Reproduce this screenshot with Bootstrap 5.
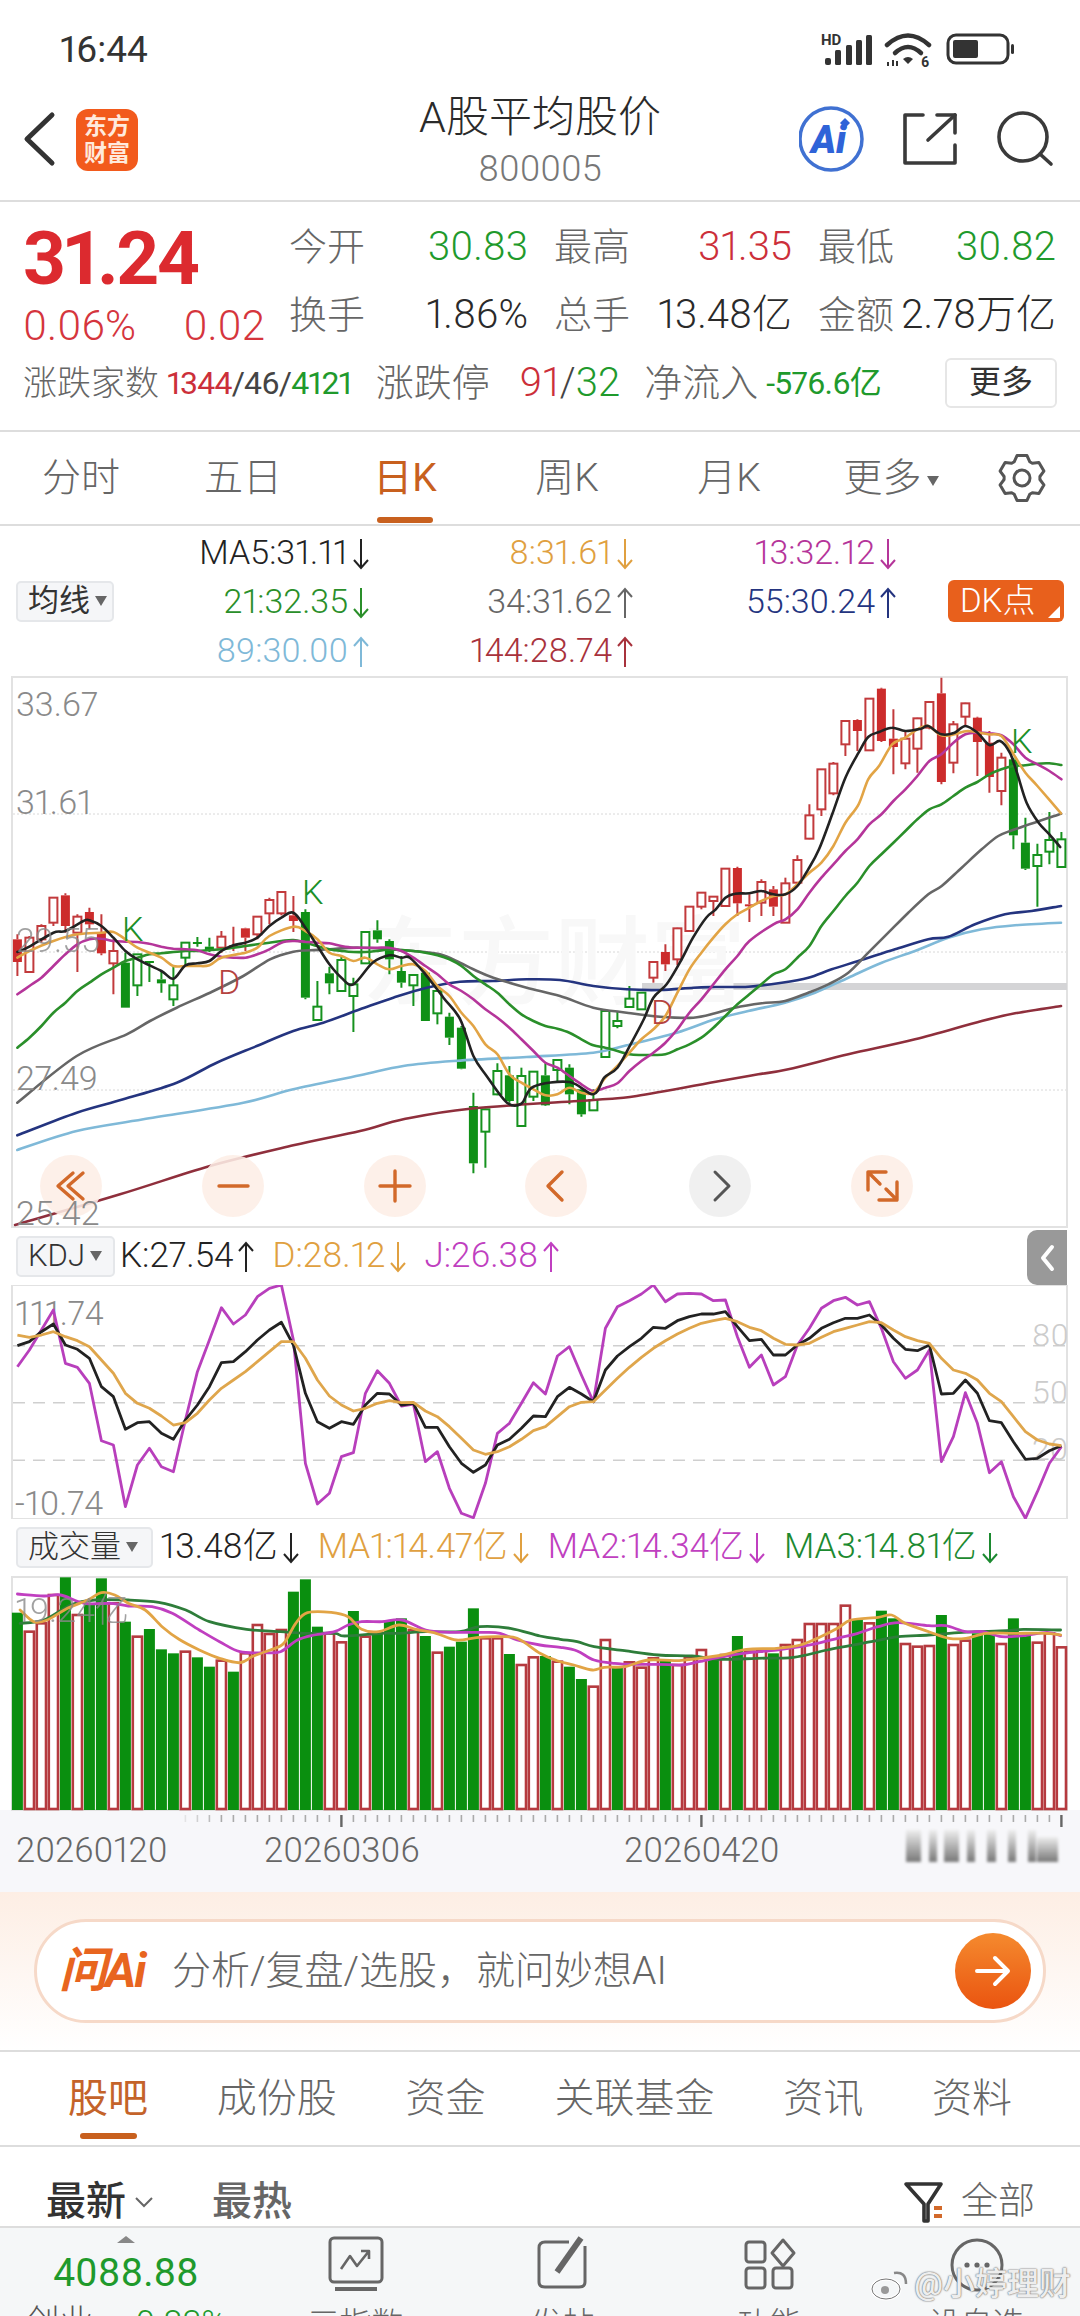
<!DOCTYPE html>
<html lang="zh-CN">
<head>
  <meta charset="UTF-8" />
  <meta name="viewport" content="width=device-width, initial-scale=1.0"/>
  <title>A股平均股价</title>
  <link href="https://cdn.jsdelivr.net/npm/bootstrap@5.3.2/dist/css/bootstrap.min.css" rel="stylesheet" />
  <style>
    body { width: 1080px; height: 2316px; overflow: hidden; background: #fff; color: #333; font-family: Roboto, "Noto Sans CJK SC", sans-serif; font-variant-numeric: proportional-nums; }
    svg { display: block; }
    .status-bar { height: 80px; padding: 20px 60px 0 60px; }
    .status-time { font-size: 37px; font-weight: 400; color: #333; }
    .title-bar { height: 122px; border-bottom: 2px solid #ddd; display: grid; grid-template-columns: 1fr auto 1fr; align-items: center; }
    .brand-logo { width: 62px; height: 62px; margin-left: 16px; border-radius: 12px; background: #f25a1c; color: #ffeadd; font-size: 23px; font-weight: 700; line-height: 27px; text-align: center; padding-top: 4px; }
    .title-text { font-size: 43px; line-height: 58px; color: #2a2a2a; text-align: center; font-weight: 300; }
    .title-code { font-size: 36px; line-height: 46px; color: #777; text-align: center; font-weight: 300; }
    .quote-box { height: 230px; border-bottom: 2px solid #ddd; padding-top: 11px; }
    .price-col { width: 289px; padding-left: 23px; }
    .price-big { font-size: 75px; line-height: 90px; font-weight: 700; color: #dc2a2f; letter-spacing: -2.5px; }
    .price-sub { font-size: 42px; line-height: 46px; color: #d5353d; font-weight: 300; width: 242px; }
    .stat-grid { display: grid; grid-template-columns: 239px 238px 238px; column-gap: 26px; grid-auto-rows: 68px; }
    .stat-cell { display: flex; justify-content: space-between; align-items: center; font-size: 40px; color: #2a2a2a; font-weight: 300; white-space: nowrap; }
    .stat-cell b { font-size: 38px; font-weight: 300; color: #666; }
    .up-text { color: #cc2f3a; }
    .down-text { color: #1f9a2c; }
    .breadth-row { height: 68px; padding: 0 23px; font-size: 38px; color: #666; font-weight: 300; }
    .breadth-row .tiny-num { font-size: 32px; color: #444; font-weight: 400; letter-spacing: -.8px; }
    .breadth-row .mid-num { font-size: 40px; color: #444; margin-left: 30px; }
    .more-btn { width: 112px; height: 50px; border: 2px solid #e6e6e6; border-radius: 6px; font-size: 32px; color: #333; line-height: 44px; text-align: center; font-weight: 400; }
    .period-tabs { height: 94px; border-bottom: 2px solid #ddd; font-size: 39px; color: #666; font-weight: 300; }
    .period-tabs > div { width: 162px; text-align: center; position: relative; }
    .period-tabs .is-on { color: #c8601e; font-weight: 400; }
    .period-tabs .is-on::after { content: ""; position: absolute; left: 53px; width: 56px; height: 6px; bottom: -16px; border-radius: 3px; background: #c8601e; }
    .caret-down { display: inline-block; border-left: 6px solid transparent; border-right: 6px solid transparent; border-top: 10px solid #666; margin-left: 5px; vertical-align: 5px; }
    .ma-legend { height: 150px; padding: 0 16px; }
    .drop-btn { background: #f5f6f8; border: 2px solid #e5e7ea; border-radius: 5px; height: 41px; font-size: 31px; line-height: 36px; color: #333; padding: 0 5px 0 10px; white-space: nowrap; }
    .ma-grid { display: grid; grid-template-columns: 256px 264px 263px; grid-auto-rows: 49px; font-size: 34px; line-height: 49px; text-align: right; font-weight: 300; }
    .arrow-mark { display: inline-block; width: 18px; height: 32px; margin-left: 4px; vertical-align: -6px; fill: none; stroke: currentColor; stroke-width: 2; }
    .dk-btn { width: 116px; height: 42px; border-radius: 6px; background: #e8601c; color: #fff; font-size: 33px; line-height: 42px; padding-left: 12px; position: relative; font-weight: 300; }
    .dk-btn::after { content: ""; position: absolute; right: 4px; bottom: 4px; border-left: 12px solid transparent; border-bottom: 12px solid #fff; }
    .indicator-head { height: 57px; padding-left: 16px; font-size: 35px; font-weight: 300; position: relative; white-space: nowrap; }
    .side-tab { position: absolute; right: 13px; top: 2px; width: 40px; height: 55px; background: #999; border-radius: 10px 0 0 10px; }
    .chart-label { font-size: 34px; fill: #8a8a8a; font-weight: 300; }
    .chart-date { font-size: 34.5px; fill: #666; font-weight: 300; }
    .chart-mark { font-size: 34px; font-weight: 300; }
    .ai-band { height: 160px; padding: 27px 34px 0; border-bottom: 2px solid #ddd; background: linear-gradient(180deg, #fdeee4 0%, #fff 100%); }
    .ai-pill { height: 104px; border: 3px solid #f6d9c8; border-radius: 52px; background: #fff; padding: 0 12px 0 22px; }
    .ai-logo { font-size: 48px; font-weight: 700; font-style: italic; color: #e8651f; width: 113px; letter-spacing: -2px; white-space: nowrap; }
    .ai-hint { font-size: 39px; color: #666; font-weight: 300; }
    .ai-go { width: 76px; height: 76px; border-radius: 50%; background: linear-gradient(180deg, #f58a2e, #ea5410); }
    .info-tabs { height: 95px; border-bottom: 2px solid #ddd; padding: 0 68px; font-size: 40px; color: #666; font-weight: 300; }
    .info-tabs > div { position: relative; }
    .info-tabs .is-on { color: #c4632a; font-weight: 400; }
    .info-tabs .is-on::after { content: ""; position: absolute; left: 12px; right: 11px; height: 6px; bottom: -10px; border-radius: 3px; background: #c8601e; }
    .sort-row { height: 81px; border-bottom: 2px solid #ddd; padding: 30px 45px 0 46px; font-size: 40px; }
    .sort-row .sort-on { font-weight: 500; color: #333; }
    .sort-row .sort-off { font-weight: 500; color: #666; margin-left: 58px; }
    .bottom-bar { display: grid; grid-template-columns: 252px repeat(4, 1fr); height: 90px; background: #f5f7f8; position: relative; overflow: hidden; text-align: center; }
    .index-up { width: 0; height: 0; margin: 8px auto 0; border-left: 9px solid transparent; border-right: 9px solid transparent; border-bottom: 7px solid #888; }
    .index-num { font-size: 39px; line-height: 46px; color: #1f9a2c; margin-top: 7px; }
    .index-sub { font-size: 34px; line-height: 40px; color: #555; font-weight: 300; margin-top: 6px; white-space: nowrap; }
    .tool-item { padding-top: 8px; }
    .tool-item svg { margin: 0 auto; }
    .tool-item div { font-size: 32px; line-height: 40px; color: #666; margin-top: 12px; font-weight: 300; }
    .weibo-mark { position: absolute; right: 9px; bottom: 10px; color: rgba(255,255,255,.88); font-size: 32px; font-weight: 500; text-shadow: 0 0 2px #777, 0 0 1px #555; white-space: nowrap; }
  </style>
</head>
<body>

  <svg width="0" height="0" style="position:absolute">
    <symbol id="arrowDown" viewBox="0 0 18 32"><path d="M9 1V30M2 22L9 30L16 22"/></symbol>
    <symbol id="arrowUp" viewBox="0 0 18 32"><path d="M9 31V2M2 10L9 2L16 10"/></symbol>
  </svg>

  <div class="status-bar d-flex justify-content-between align-items-center">
    <span class="status-time">16:44</span>
    <svg width="200" height="40" viewBox="820 30 200 40">
      <text x="821" y="45" font-size="15" font-weight="700" fill="#333">HD</text>
      <g fill="#333">
        <rect x="825" y="58" width="6" height="7" rx="2"/><rect x="835" y="50" width="6" height="15" rx="1.5"/><rect x="846" y="45" width="6" height="20" rx="1.5"/><rect x="856" y="40" width="6" height="25" rx="1.5"/><rect x="866" y="35" width="6" height="30" rx="1.5"/>
        <path d="M903 59Q908 55 913 59L908 64Z"/>
        <path d="M887 62v4h2v-4zM892 60v6h2v-6zM896 61v5h2v-5z"/>
      </g>
      <g fill="none" stroke="#333" stroke-width="4.5" stroke-linecap="round">
        <path d="M887 45Q908 26 929 45"/><path d="M895 53Q908 41 921 53"/>
      </g>
      <text x="921" y="67" font-size="14" font-weight="700" fill="#333">6</text>
      <rect x="948" y="35" width="60" height="28" rx="8" fill="none" stroke="#333" stroke-width="3"/>
      <rect x="953" y="40" width="25" height="18" rx="2" fill="#333"/>
      <rect x="1011" y="44" width="3" height="10" rx="1.5" fill="#333"/>
    </svg>
  </div>

  <div class="title-bar">
    <div class="d-flex align-items-center ps-3">
      <svg width="44" height="80" viewBox="16 100 44 80"><path d="M52 115L27 139L52 163" fill="none" stroke="#333" stroke-width="5" stroke-linecap="round" stroke-linejoin="round"/></svg>
      <div class="brand-logo">东方<br>财富</div>
    </div>
    <div>
      <div class="title-text">A股平均股价</div>
      <div class="title-code">800005</div>
    </div>
    <div class="d-flex justify-content-end pe-3">
      <svg width="265" height="80" viewBox="799 100 265 80">
        <circle cx="831" cy="139" r="31" fill="#fff" stroke="#4071d2" stroke-width="3.5"/>
        <text x="811" y="153" font-size="38" font-weight="900" font-style="italic" fill="#2f63d8">Ai</text>
        <path d="M845 118l5 5l-5 5l-5-5z" fill="#2f63d8"/>
        <g fill="none" stroke="#3a3a3a" stroke-width="3.6" stroke-linecap="round" stroke-linejoin="round">
          <path d="M923 115H905V163H955V145"/><path d="M928 140L955 115"/><path d="M937 115H955V133"/>
          <circle cx="1023" cy="137" r="24"/><path d="M1040 154L1051 164"/>
        </g>
      </svg>
    </div>
  </div>

  <div class="quote-box">
    <div class="d-flex">
      <div class="price-col">
        <div class="price-big">31.24</div>
        <div class="price-sub d-flex justify-content-between"><span>0.06%</span><span>0.02</span></div>
      </div>
      <div class="stat-grid">
        <div class="stat-cell"><b>今开</b><span class="down-text">30.83</span></div>
        <div class="stat-cell"><b>最高</b><span class="up-text">31.35</span></div>
        <div class="stat-cell"><b>最低</b><span class="down-text">30.82</span></div>
        <div class="stat-cell"><b>换手</b><span>1.86%</span></div>
        <div class="stat-cell"><b>总手</b><span>13.48亿</span></div>
        <div class="stat-cell"><b>金额</b><span>2.78万亿</span></div>
      </div>
    </div>
    <div class="breadth-row d-flex align-items-center">
      <span style="font-size:34px">涨跌家数</span>
      <span class="tiny-num ms-2"><span class="up-text">1344</span>/46/<span class="down-text">4121</span></span>
      <span class="ms-4">涨跌停</span>
      <span class="mid-num"><span class="up-text">91</span>/<span class="down-text">32</span></span>
      <span class="ms-4">净流入</span>
      <span class="tiny-num ms-2"><span class="down-text">-576.6亿</span></span>
      <span class="more-btn ms-auto">更多</span>
    </div>
  </div>

  <div class="period-tabs d-flex align-items-center">
    <div>分时</div>
    <div>五日</div>
    <div class="is-on">日K</div>
    <div>周K</div>
    <div>月K</div>
    <div>更多<span class="caret-down"></span></div>
    <svg id="gearIcon" class="ms-4" width="52" height="52" viewBox="-26 -26 52 52"></svg>
  </div>

  <div class="ma-legend d-flex align-items-center">
    <div class="drop-btn" style="width:98px">均线<span class="caret-down"></span></div>
    <div class="ma-grid">
      <div style="color:#222">MA5:31.11<svg class="arrow-mark"><use href="#arrowDown"/></svg></div>
      <div style="color:#e0a040">8:31.61<svg class="arrow-mark"><use href="#arrowDown"/></svg></div>
      <div style="color:#b5359a">13:32.12<svg class="arrow-mark"><use href="#arrowDown"/></svg></div>
      <div style="color:#2a8f2a">21:32.35<svg class="arrow-mark"><use href="#arrowDown"/></svg></div>
      <div style="color:#666">34:31.62<svg class="arrow-mark"><use href="#arrowUp"/></svg></div>
      <div style="color:#24347f">55:30.24<svg class="arrow-mark"><use href="#arrowUp"/></svg></div>
      <div style="color:#7fb9d8">89:30.00<svg class="arrow-mark"><use href="#arrowUp"/></svg></div>
      <div style="color:#a8323c">144:28.74<svg class="arrow-mark"><use href="#arrowUp"/></svg></div>
    </div>
    <div class="dk-btn ms-auto">DK点</div>
  </div>

  <svg width="1080" height="552" viewBox="0 676 1080 552">
    <rect x="12" y="677" width="1055" height="550" fill="#fff" stroke="#e2e2e2" stroke-width="2"/>
    <g stroke="#d8d8d8" stroke-dasharray="2 2">
      <line x1="13" x2="1066" y1="814" y2="814"/><line x1="13" x2="1066" y1="952" y2="952"/><line x1="13" x2="1066" y1="1090" y2="1090"/>
    </g>
    <rect x="642" y="983" width="425" height="7" fill="#d4d4d6"/>
    <text x="362" y="996" font-size="96" fill="#f8f8f8" font-weight="500">东方财富</text>
    <g id="candles"></g>
    <g id="maLines" fill="none" stroke-width="2.6" stroke-linecap="round"></g>
    <g fill="#fdeee6" fill-opacity=".88">
      <circle cx="71" cy="1186" r="31"/><circle cx="233" cy="1186" r="31"/><circle cx="395" cy="1186" r="31"/><circle cx="556" cy="1186" r="31"/><circle cx="882" cy="1186" r="31"/>
    </g>
    <circle cx="720" cy="1186" r="31" fill="#eee" fill-opacity=".9"/>
    <g fill="none" stroke="#d2692a" stroke-width="3.4" stroke-linecap="round" stroke-linejoin="round">
      <path d="M73 1173L58 1186L73 1199M83 1173L68 1186L83 1199"/>
      <path d="M219 1186H248"/>
      <path d="M380 1186H410M395 1171V1201"/>
      <path d="M562 1172L548 1186L562 1200"/>
      <path d="M868 1190V1172H886M868 1172L880 1184M897 1182V1200H879M897 1200L886 1189"/>
    </g>
    <path d="M715 1172L729 1186L715 1200" fill="none" stroke="#555" stroke-width="3" stroke-linecap="round" stroke-linejoin="round"/>
    <text class="chart-label" x="16" y="716">33.67</text>
    <text class="chart-label" x="16" y="814">31.61</text>
    <text class="chart-label" x="16" y="952" opacity=".8">29.55</text>
    <text class="chart-label" x="16" y="1090">27.49</text>
    <text class="chart-label" x="16" y="1225">25.42</text>
    <text class="chart-mark" x="122" y="941" fill="#1c9028">K</text>
    <text class="chart-mark" x="302" y="904" fill="#1c9028">K</text>
    <text class="chart-mark" x="1011" y="753" fill="#1c9028">K</text>
    <text class="chart-mark" x="218" y="994" fill="#b5433f">D</text>
    <text class="chart-mark" x="651" y="1024" fill="#b5433f">D</text>
  </svg>

  <div class="indicator-head d-flex align-items-center">
    <div class="drop-btn" style="width:99px">KDJ<span class="caret-down"></span></div>
    <span style="margin-left:5px;color:#222">K:27.54<svg class="arrow-mark"><use href="#arrowUp"/></svg></span>
    <span style="margin-left:17px;color:#e0a040">D:28.12<svg class="arrow-mark"><use href="#arrowDown"/></svg></span>
    <span style="margin-left:17px;color:#c03fc0">J:26.38<svg class="arrow-mark"><use href="#arrowUp"/></svg></span>
    <div class="side-tab d-flex align-items-center justify-content-center">
      <svg width="18" height="28" viewBox="0 0 18 28"><path d="M14 3L5 14L14 25" fill="none" stroke="#fff" stroke-width="4" stroke-linecap="round" stroke-linejoin="round"/></svg>
    </div>
  </div>

  <svg width="1080" height="234" viewBox="0 1285 1080 234">
    <rect x="12" y="1285" width="1055" height="234" fill="#fff" stroke="#e2e2e2" stroke-width="2"/>
    <g stroke="#cfcfcf" stroke-width="1.5" stroke-dasharray="12 8">
      <line x1="13" x2="1066" y1="1345.7" y2="1345.7"/><line x1="13" x2="1066" y1="1402.7" y2="1402.7"/><line x1="13" x2="1066" y1="1460.3" y2="1460.3"/>
    </g>
    <text class="chart-label" x="1032" y="1346" style="fill:#ccc;font-size:32px">80</text>
    <text class="chart-label" x="1032" y="1403" style="fill:#ccc;font-size:32px">50</text>
    <text class="chart-label" x="1032" y="1460" style="fill:#ccc;font-size:32px">20</text>
    <text class="chart-label" x="15" y="1325">111.74</text>
    <text class="chart-label" x="15" y="1515">-10.74</text>
    <g id="kdjLines" fill="none" stroke-width="2.8" stroke-linejoin="round"></g>
  </svg>

  <div class="indicator-head d-flex align-items-center">
    <div class="drop-btn" style="width:137px">成交量<span class="caret-down"></span></div>
    <span style="margin-left:7px;color:#222">13.48亿<svg class="arrow-mark"><use href="#arrowDown"/></svg></span>
    <span style="margin-left:18px;color:#e0a040">MA1:14.47亿<svg class="arrow-mark"><use href="#arrowDown"/></svg></span>
    <span style="margin-left:18px;color:#c03fc0">MA2:14.34亿<svg class="arrow-mark"><use href="#arrowDown"/></svg></span>
    <span style="margin-left:18px;color:#1c8a30">MA3:14.81亿<svg class="arrow-mark"><use href="#arrowDown"/></svg></span>
  </div>

  <svg width="1080" height="316" viewBox="0 1576 1080 316">
    <rect x="0" y="1810" width="1080" height="82" fill="#f7f7fa"/>
    <rect x="12" y="1577" width="1055" height="233" fill="#fff" stroke="#e2e2e2" stroke-width="2"/>
    <g id="volBars"></g>
    <g id="volLines" fill="none" stroke-width="2.8" stroke-linecap="round"></g>
    <text class="chart-label" x="15" y="1622" opacity=".8">19.24亿</text>
    <g id="volTicks"></g>
    <text class="chart-date" x="16" y="1862">20260120</text>
    <text class="chart-date" x="264" y="1862">20260306</text>
    <text class="chart-date" x="624" y="1862">20260420</text>
    <defs>
      <linearGradient id="smudge" x1="0" y1="0" x2="0" y2="1"><stop offset="0" stop-color="#eee"/><stop offset="1" stop-color="#777"/></linearGradient>
      <filter id="soft"><feGaussianBlur stdDeviation="1.6"/></filter>
    </defs>
    <g fill="url(#smudge)" filter="url(#soft)">
      <rect x="906" y="1830" width="15" height="32"/><rect x="929" y="1830" width="8" height="32"/><rect x="944" y="1830" width="15" height="32"/><rect x="967" y="1830" width="8" height="32"/><rect x="987" y="1830" width="9" height="32"/><rect x="1008" y="1830" width="8" height="32"/><rect x="1028" y="1830" width="8" height="32"/><rect x="1037" y="1837" width="21" height="25"/>
    </g>
  </svg>

  <div class="ai-band">
    <div class="ai-pill d-flex align-items-center">
      <span class="ai-logo">问Ai</span>
      <span class="ai-hint">分析/复盘/选股，就问妙想AI</span>
      <span class="ai-go ms-auto d-flex align-items-center justify-content-center">
        <svg width="40" height="40" viewBox="0 0 40 40"><path d="M4 20H34M22 7L35 20L22 33" fill="none" stroke="#fff" stroke-width="4" stroke-linecap="round" stroke-linejoin="round"/></svg>
      </span>
    </div>
  </div>

  <div class="info-tabs d-flex justify-content-between align-items-center">
    <div class="is-on">股吧</div>
    <div>成份股</div>
    <div>资金</div>
    <div>关联基金</div>
    <div>资讯</div>
    <div>资料</div>
  </div>

  <div class="sort-row d-flex align-items-center">
    <span class="sort-on">最新</span>
    <svg class="ms-2" width="20" height="12" viewBox="0 0 20 12"><path d="M2 2L10 10L18 2" fill="none" stroke="#666" stroke-width="2"/></svg>
    <span class="sort-off">最热</span>
    <svg class="ms-auto" width="42" height="42" viewBox="0 0 42 42">
      <path d="M3 3H38L25 23V40H21V23Z" fill="none" stroke="#333" stroke-width="3.6" stroke-linejoin="round"/>
      <rect x="31" y="25" width="8" height="4" fill="#d2692a"/><rect x="31" y="33" width="8" height="4" fill="#d2692a"/>
    </svg>
    <span class="ms-3" style="font-size:37px;color:#666;font-weight:300">全部</span>
  </div>

  <div class="bottom-bar">
    <div>
      <div class="index-up"></div>
      <div class="index-num">4088.88</div>
      <div class="index-sub">创业 <span class="down-text ms-4">-0.83%</span></div>
    </div>
    <div class="tool-item">
      <svg width="60" height="56" viewBox="0 0 60 56" fill="none" stroke="#666" stroke-width="3" stroke-linejoin="round">
        <rect x="4" y="2" width="52" height="44" rx="4"/><path d="M9 53H51" stroke-width="4"/><path d="M15 33L24 20L31 30L43 15M35 15H43V23" stroke-width="2.6"/>
      </svg>
      <div>三指数</div>
    </div>
    <div class="tool-item">
      <svg width="60" height="56" viewBox="0 0 60 56" fill="none" stroke="#666" stroke-width="3" stroke-linejoin="round">
        <path d="M36 6H12Q6 6 6 12V46Q6 51 12 51H46Q52 51 52 46V10"/><path d="M24 36L48 2" stroke-width="6"/>
      </svg>
      <div>发帖</div>
    </div>
    <div class="tool-item">
      <svg width="60" height="56" viewBox="0 0 60 56" fill="none" stroke="#666" stroke-width="3" stroke-linejoin="round">
        <rect x="6" y="6" width="19" height="20" rx="3"/><path d="M43 4L54 17L43 30L32 17Z"/><rect x="6" y="32" width="19" height="20" rx="3"/><rect x="33" y="32" width="19" height="20" rx="3"/>
      </svg>
      <div>功能</div>
    </div>
    <div class="tool-item">
      <svg width="60" height="56" viewBox="0 0 60 56">
        <circle cx="30" cy="29" r="25" fill="none" stroke="#666" stroke-width="3"/>
        <circle cx="20" cy="29" r="2.6" fill="#666"/><circle cx="30" cy="29" r="2.6" fill="#666"/><circle cx="40" cy="29" r="2.6" fill="#666"/>
      </svg>
      <div>设自选</div>
    </div>
    <div class="weibo-mark d-flex align-items-center">
      <svg width="40" height="34" viewBox="0 0 40 34" class="me-1"><ellipse cx="16" cy="22" rx="14" ry="10" fill="none" stroke="#fff" stroke-width="3"/><ellipse cx="16" cy="22" rx="14" ry="10" fill="none" stroke="#777" stroke-width="1"/><path d="M24 6Q36 4 36 17" fill="none" stroke="#888" stroke-width="2.5"/><circle cx="15" cy="23" r="4" fill="#999"/></svg>
      @小婷理财
    </div>
  </div>

  <script>
    const X = i => 17.4 + 12 * i;

    // colour R/G + solid 1/0, body top, body bottom, wick top, wick bottom; y in 1/3 px from chart top
    const candleData = [
      "R1 790 858 775 900","R0 785 888 780 888","R0 750 790 745 800","R0 665 740 665 750","R1 658 750 652 770","R0 722 770 715 888","R1 708 745 695 760","R1 770 832 715 838","R0 825 862 790 955",
      "G1 860 995 830 995","G0 835 928 835 960","G1 855 858 855 918","G1 910 922 885 950","G0 928 970 870 990","G0 800 845 798 868","G1 798 801 783 812","G1 812 824 785 828",
      "R0 782 815 765 830","R1 808 810 752 825","R1 757 785 755 825","R0 722 775 720 790","R0 672 712 665 745","R0 648 712 648 718","R1 718 735 660 768",
      "G1 708 965 700 970","G0 992 1032 915 1035","G1 892 922 872 955","G0 852 945 840 948","G0 925 960 905 1068","G0 768 862 768 862","G1 763 790 733 800","G1 795 850 790 895","G1 885 920 840 935","G0 897 928 897 990",
      "G1 890 1035 885 1035","G0 945 1012 945 1045","G1 1022 1085 1010 1107","G1 1055 1178 1050 1180","G1 1290 1462 1250 1492","G0 1300 1367 1298 1475","G0 1185 1255 1162 1258","G1 1198 1275 1170 1280","G0 1200 1350 1175 1350","G0 1187 1262 1187 1275",
      "G1 1198 1288 1162 1290","G0 1152 1182 1150 1215","G1 1175 1255 1165 1285","G1 1240 1315 1238 1322","G0 1272 1303 1240 1305","G0 1005 1143 1002 1145","G0 1035 1050 1008 1057","G0 968 993 930 995","G0 950 1000 948 1002",
      "R0 858 905 858 920","R1 828 865 805 885","R0 757 850 755 868","R0 692 765 690 767","R0 650 692 650 700","R0 662 675 660 720","R0 578 690 578 692","R1 576 682 572 720","R1 685 688 655 738","R0 618 680 610 720","R1 640 692 630 720","R0 622 740 605 740","R0 552 620 538 625",
      "R0 418 488 385 490","R0 280 400 280 420","R0 263 352 258 358","R0 135 205 132 240","R1 132 165 130 225","R0 68 223 68 225","R1 38 195 35 198","R1 188 213 100 295","R0 188 262 165 280","R0 127 218 125 290","R0 78 155 78 160","R1 52 318 5 325","R0 145 260 135 292","R0 82 122 80 150","R1 125 198 122 300","R1 200 303 165 350","R0 245 345 230 388",
      "G1 250 478 245 520","G1 500 578 425 582","G0 537 570 503 692","G0 492 527 408 565","G0 490 573 468 573"
    ];

    function renderCandles() {
      const mainY = z => 676 + z / 3;
      let html = "";
      candleData.forEach((row, i) => {
        const parts = row.split(" ");
        const isRed = parts[0][0] === "R";
        const isSolid = parts[0][1] === "1";
        const [top, bot, hi, lo] = parts.slice(1).map(Number);
        const line = isRed ? "#c23a3c" : "#16921e";
        const fill = isRed ? "#cc2c2c" : "#0f9016";
        const x = X(i);
        html += `<path d="M${x} ${mainY(hi)}V${mainY(top)}M${x} ${mainY(bot)}V${mainY(lo)}" stroke="${line}" stroke-width="2"/>`;
        html += isSolid
          ? `<rect x="${x - 4.5}" y="${mainY(top)}" width="9" height="${Math.max((bot - top) / 3, 2)}" fill="${fill}"/>`
          : `<rect x="${x - 4}" y="${mainY(top)}" width="8" height="${(bot - top) / 3}" fill="#fff" stroke="${line}" stroke-width="2"/>`;
      });
      document.getElementById("candles").innerHTML = html;
    }

    function smooth(p) {
      let d = `M${p[0][0].toFixed(1)} ${p[0][1].toFixed(1)}`;
      for (let i = 0; i < p.length - 1; i++) {
        const p0 = p[i - 1] || p[i], p1 = p[i], p2 = p[i + 1], p3 = p[i + 2] || p2;
        const c1x = p1[0] + (p2[0] - p0[0]) / 6, c1y = p1[1] + (p2[1] - p0[1]) / 6;
        const c2x = p2[0] - (p3[0] - p1[0]) / 6, c2y = p2[1] - (p3[1] - p1[1]) / 6;
        d += `C${c1x.toFixed(1)} ${c1y.toFixed(1)} ${c2x.toFixed(1)} ${c2y.toFixed(1)} ${p2[0].toFixed(1)} ${p2[1].toFixed(1)}`;
      }
      return d;
    }

    // flat [index, z, index, z...]
    const byIndex = (arr, toY) => {
      const out = [];
      for (let k = 0; k < arr.length; k += 2) out.push([X(arr[k]), toY(arr[k + 1])]);
      return out;
    };
    // flat [cropX, z...] read from a crop starting at page x = base
    const byCrop = (base, scale, arr, toY) => {
      const out = [];
      for (let k = 0; k < arr.length; k += 2) out.push([base + arr[k] / scale, toY(arr[k + 1])]);
      return out;
    };

    function renderMaLines() {
      const y = z => 676 + z / 3;
      const lines = [
        ["#8f2f3c", [...byCrop(10,3,[15,1647,330,1555,600,1470,850,1408],y), ...byCrop(360,3,[0,1365,130,1330,330,1298,700,1272,830,1260,1080,1215],y).slice(0), ...byCrop(715,3,[130,1195,220,1180,400,1135,600,1090,800,1035,900,1012,1038,990],y)]],
        ["#7fb9d8", [...byCrop(10,3,[22,1422,200,1365,400,1330,700,1280,850,1240],y), ...byCrop(360,3,[0,1198,130,1170,280,1155,500,1143,700,1130,800,1108,950,1070],y), ...byCrop(715,3,[0,1030,100,1005,210,980,300,950,400,905,500,860,600,825,700,785,800,760,900,748,1038,740],y)]],
        ["#24347f", [...byCrop(10,3,[22,1378,200,1310,340,1270,500,1220,620,1160,740,1110,850,1065,940,1040],y), ...byCrop(360,3,[0,1000,100,965,200,935,300,917,400,915,500,910,600,912,700,930,800,940,900,942,1000,935],y), ...byCrop(715,3,[0,933,100,932,200,920,280,905,350,880,430,855,540,820,640,790,700,782,780,745,870,715,950,705,1038,690],y)]],
        ["#666666", [...byCrop(10,3,[22,1280,200,1140,350,1075,420,1035,500,995,600,950,700,900,780,850,850,827,900,823,960,820],y), ...byCrop(360,3,[0,815,160,825,240,835,300,860,340,880,400,905,500,935,600,960,700,995,800,1010,900,1022,1000,1025],y), ...byCrop(715,3,[0,1012,60,995,140,982,210,975,280,950,340,925,400,890,460,830,520,770,580,710,640,655,680,630,740,575,800,520,850,480,900,460,1038,413],y)]],
        ["#2a8f2a", byIndex([0,1115,1,1085,2,1050,3,1010,4,980,5,945,6,920,7,895,8,875,9,855,10,845,11,835,12,832,13,828,14,825,15,825,16,822,17,820,18,815,19,810,20,805,21,800,22,795,23,792,24,800,25,810,26,820,27,825,28,828,29,828,30,825,31,820,32,822,33,825,34,830,35,838,36,850,37,870,38,900,39,925,40,950,41,985,42,1015,43,1035,44,1050,45,1058,46,1070,47,1090,48,1108,49,1115,50,1125,51,1135,52,1137,53,1137,54,1135,55,1120,56,1105,57,1085,58,1055,59,1020,60,985,61,955,62,925,63,895,64,880,65,845,66,810,67,750,68,705,69,660,70,620,71,570,72,535,73,500,74,465,75,430,76,400,77,385,78,360,79,335,80,318,81,295,82,280,83,270,84,268,85,263,86,262,87,267], y)],
        ["#b5359a", byIndex([0,955,1,930,2,905,3,870,4,835,5,805,6,790,7,788,8,795,9,797,10,798,11,803,12,812,13,818,14,820,15,823,16,835,17,842,18,845,19,845,20,835,21,820,22,800,23,795,24,797,25,800,26,802,27,810,28,815,29,815,30,815,31,815,32,825,33,845,34,870,35,895,36,925,37,945,38,970,39,1000,40,1025,41,1055,42,1090,43,1125,44,1160,45,1175,46,1200,47,1225,48,1245,49,1235,50,1222,51,1185,52,1155,53,1130,54,1100,55,1060,56,1010,57,970,58,925,59,880,60,840,61,795,63,745,64,730,65,700,66,650,67,605,68,565,69,525,70,490,71,445,72,415,73,375,74,340,75,300,76,255,77,235,78,200,79,175,80,170,81,172,82,178,83,205,84,245,85,265,86,285,87,310], y)],
        ["#e2a445", byIndex([0,845,1,825,3,795,5,775,7,770,8,768,9,790,10,815,11,830,12,845,13,870,14,870,15,870,16,868,17,845,19,830,20,815,21,780,23,752,24,765,25,790,26,830,27,840,28,855,29,845,30,865,31,880,32,870,33,865,34,885,35,930,36,960,37,1010,38,1050,39,1105,40,1135,41,1195,42,1220,43,1240,44,1258,45,1255,46,1235,47,1250,48,1250,49,1205,50,1170,51,1130,52,1090,53,1060,54,1020,55,950,56,880,57,830,58,785,59,745,60,715,61,695,62,675,63,660,64,655,65,625,66,590,67,560,68,510,69,440,70.1,385,70.9,310,71.8,270,72.9,205,74,185,75,160,75.9,150,77,178,78.1,175,79.2,165,80.9,175,82,180,83.1,240,84,290,85,330,86.97,412], y)],
        ["#222222", byIndex([0,828,1,812,3,770,4,765,5.5,735,6,733,7,750,8,785,9,825,10,850,12,885,13,908,14,868,15,862,16,855,17,825,18,808,19,800,20,785,21,750,22,725,23,710,24,755,25,810,26,865,27,905,28,925,29.6,860,31,838,32,845,32.7,845,34,895,35.5,965,36.9,1030,38,1140,39.1,1200,40.8,1280,42,1283,43,1232,46,1218,48,1255,48.9,1205,50,1175,51.1,1105,52.2,1030,53,965,54.1,925,55.2,860,56.3,785,57.4,725,58.2,700,59,665,59.8,653,61,652,62,645,63,655,64,655,65,630,65.9,580,66.8,520,67.9,415,69,305,70.1,230,70.9,183,71.8,168,72.9,155,74,165,75.3,158,75.9,150,77,175,78.1,170,79,150,80,170,81,207,81.9,195,82.7,230,83.3,290,84.1,380,85.1,440,86,475,86.9,513], y)]
      ];
      document.getElementById("maLines").innerHTML = lines.map(l => `<path d="${smooth(l[1])}" stroke="${l[0]}"/>`).join("");
    }

    function renderKdj() {
      const y = z => 1280 + z / 3;
      const toPoints = arr => arr.map((z, i) => `${X(i).toFixed(1)},${y(z).toFixed(1)}`).join(" ");
      const k = [197,185,155,132,195,208,235,320,350,448,428,425,460,478,420,375,320,248,245,215,180,150,127,195,340,425,445,425,433,375,340,342,375,370,442,442,500,550,577,555,495,478,445,408,410,350,322,342,365,270,228,200,175,142,145,122,110,102,102,95,140,182,178,225,225,195,175,145,128,115,115,105,135,175,208,212,195,342,340,300,340,422,428,485,538,535,512,497];
      const d = [165,172,165,155,170,182,200,240,280,340,370,385,408,435,428,400,360,325,300,275,245,215,185,185,235,300,348,375,393,385,370,362,368,367,393,410,440,475,510,523,515,500,478,452,440,410,380,367,365,330,295,262,232,205,182,162,145,130,122,115,125,142,152,175,193,195,190,172,155,145,135,125,128,150,170,182,190,235,270,280,300,340,365,410,455,480,492,497];
      const j = [260,210,150,90,250,262,310,482,495,680,555,505,560,575,420,275,180,83,132,105,50,25,15,180,550,672,640,530,518,340,272,310,378,372,545,515,625,700,713,610,460,430,370,308,342,228,200,285,365,145,80,62,42,15,65,42,40,42,62,60,170,262,225,315,290,195,145,85,62,52,75,65,145,245,295,270,210,545,470,338,430,578,545,650,715,635,550,500];
      document.getElementById("kdjLines").innerHTML =
        `<polyline points="${toPoints(j)}" stroke="#b83fbc"/><polyline points="${toPoints(k)}" stroke="#222"/><polyline points="${toPoints(d)}" stroke="#dfa64c"/>`;
    }

    function renderVolume() {
      const y = z => 1570 + z / 3;
      const bars = "G128 R185 R160 R75 G22 R135 G100 G25 R100 G155 R200 G177 G238 G250 R245 G262 G290 R272 G305 R250 R165 R192 R180 G65 G28 G170 R190 R217 G123 R200 G185 G150 G145 R180 G198 R248 G230 G215 G115 R205 R205 G252 R285 R262 G258 R275 G290 G327 R350 R210 G290 R277 R293 R265 G270 R285 R262 R240 G265 R255 G198 R245 R240 G250 R225 R210 R162 R162 R162 R107 G150 R160 G122 G145 R222 R230 R228 G135 R225 R212 G190 G190 R222 G145 G195 R218 R190 R232".split(" ");
      let html = "";
      bars.forEach((b, i) => {
        const top = y(Number(b.slice(1)));
        const x = X(i);
        html += b[0] === "G"
          ? `<rect x="${x - 5.5}" y="${top}" width="11" height="${1810 - top}" fill="#0a8f0f"/>`
          : `<rect x="${x - 4.6}" y="${top}" width="9.2" height="${1809 - top}" fill="#fff" stroke="#b53a3f" stroke-width="2.6"/>`;
      });
      document.getElementById("volBars").innerHTML = html;

      const lines = [
        ["#2e7d3a", [...byCrop(10,2.958,[30,160,100,150,180,105,250,90,350,90,440,97,520,120,590,155,700,178,800,185,870,190,960,190,990,198,1100,190,1150,190,1230,185,1330,185,1390,170,1480,175],y), ...byCrop(540,2.958,[0,198,60,208,110,215,160,230,250,242,350,255,450,258,530,268,640,265,750,262,850,240,980,215,1060,200,1150,195,1250,187,1380,182,1430,178,1540,180],y)]],
        ["#c03fc0", [...byCrop(10,2.958,[22,72,100,78,150,75,220,100,300,100,350,108,420,110,480,130,560,180,620,215,680,245,750,248,800,245,850,210,900,195,960,185,1000,165,1040,155,1100,155,1160,150,1230,180,1300,187,1400,187,1450,190,1500,210],y), ...byCrop(540,2.958,[0,225,60,232,110,243,160,270,220,280,280,283,350,283,420,285,470,275,540,260,600,250,700,240,770,230,830,218,880,205,940,190,1000,170,1060,158,1150,167,1200,167,1260,185,1310,185,1365,200,1430,197,1500,187,1540,197],y)]],
        ["#e2a445", [...byCrop(10,2.958,[30,120,70,155,110,150,170,115,230,90,270,68,310,75,350,100,400,120,450,170,500,208,560,240,620,265,680,278,720,258,770,240,810,220,845,160,880,128,950,127,1000,140,1040,178,1090,185,1150,165,1200,178,1260,190,1320,210,1380,203,1440,200,1500,205],y), ...byCrop(540,2.958,[0,250,50,272,100,285,155,300,190,292,250,290,320,270,400,272,470,265,540,255,610,238,700,235,770,225,830,200,880,175,920,150,1000,142,1040,135,1080,160,1150,185,1210,205,1260,205,1320,190,1400,190,1500,190,1540,195],y)]]
      ];
      document.getElementById("volLines").innerHTML = lines.map(l => `<path d="${smooth(l[1])}" stroke="${l[0]}"/>`).join("");

      let ticks = "";
      for (let i = 14; i < 88; i++) {
        const major = i === 27 || i === 57 || i === 87;
        const x = X(i);
        const opacity = i < 17 ? (i - 13) / 4 : 1;
        ticks += `<line x1="${x}" x2="${x}" y1="1815" y2="${major ? 1827 : 1822}" stroke="${major ? "#666" : "#aaa"}" stroke-width="${major ? 2.4 : 1.6}" opacity="${opacity}"/>`;
      }
      document.getElementById("volTicks").innerHTML = ticks;
    }

    function renderGear() {
      let d = "";
      for (let t = 0; t < 6; t++) {
        const a = t * Math.PI / 3 - Math.PI / 2;
        const pt = (r, off) => `${(r * Math.cos(a + off)).toFixed(1)} ${(r * Math.sin(a + off)).toFixed(1)}`;
        d += `${t ? "L" : "M"}${pt(18, -0.44)}L${pt(23, -0.22)}L${pt(23, 0.22)}L${pt(18, 0.44)}`;
      }
      document.getElementById("gearIcon").innerHTML =
        `<path d="${d}Z" fill="none" stroke="#555" stroke-width="3" stroke-linejoin="round"/><circle r="8" fill="none" stroke="#555" stroke-width="3"/>`;
    }

    renderCandles();
    renderMaLines();
    renderKdj();
    renderVolume();
    renderGear();
  </script>

  <script src="https://cdn.jsdelivr.net/npm/bootstrap@5.3.2/dist/js/bootstrap.bundle.min.js"></script>
</body>
</html>
